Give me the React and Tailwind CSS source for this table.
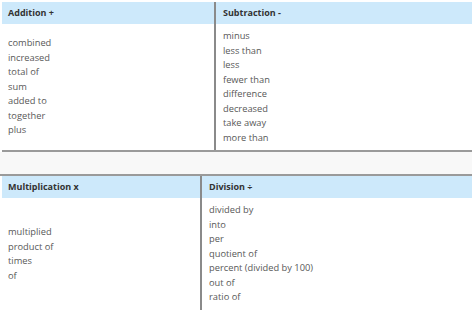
import React from 'react';

const TABLES = [
  {
    left: { title: 'Addition +', items: ['combined', 'increased', 'total of', 'sum', 'added to', 'together', 'plus'] },
    right: { title: 'Subtraction -', items: ['minus', 'less than', 'less', 'fewer than', 'difference', 'decreased', 'take away', 'more than'] },
    leftWidth: 'w-[214px]',
    bodyHeight: 'h-[126px]',
  },
  {
    left: { title: 'Multiplication x', items: ['multiplied', 'product of', 'times', 'of'] },
    right: { title: 'Division ÷', items: ['divided by', 'into', 'per', 'quotient of', 'percent (divided by 100)', 'out of', 'ratio of'] },
    leftWidth: 'w-[200px]',
    bodyHeight: 'h-[112px]',
  },
];

function WordTable({ left, right, leftWidth, bodyHeight, last }) {
  return (
    <div className={`w-[470px] ml-[2px] bg-white ${last ? '' : 'border-b-2 border-[#9a9a9a]'}`}>
      <div className="flex bg-[#cde9fb] h-[22px] items-center text-[9px] font-bold text-[#333]">
        <div className={`${leftWidth} h-full flex items-center px-[6px] border-r-2 border-[#8a8a8a]`}>{left.title}</div>
        <div className="flex-1 px-[7px]">{right.title}</div>
      </div>
      <div className={`flex ${bodyHeight} text-[9.3px] text-[#585858] leading-[14.5px]`}>
        <div className={`${leftWidth} h-full flex flex-col justify-center px-[6px] border-r-2 border-[#8a8a8a]`}>
          {left.items.map(w => <div key={w}>{w}</div>)}
        </div>
        <div className="flex-1 flex flex-col justify-center px-[7px]">
          {right.items.map(w => <div key={w}>{w}</div>)}
        </div>
      </div>
    </div>
  );
}

export default function App() {
  return (
    <div className="w-[474px] h-[312px] overflow-hidden bg-white pt-[2px]" style={{ fontFamily: '"Open Sans", sans-serif' }}>
      <WordTable {...TABLES[0]} />
      <div className="w-[472px] h-[24px] bg-[#f8f8f8] border-b-2 border-[#9a9a9a]" />
      <WordTable {...TABLES[1]} last />
    </div>
  );
}
